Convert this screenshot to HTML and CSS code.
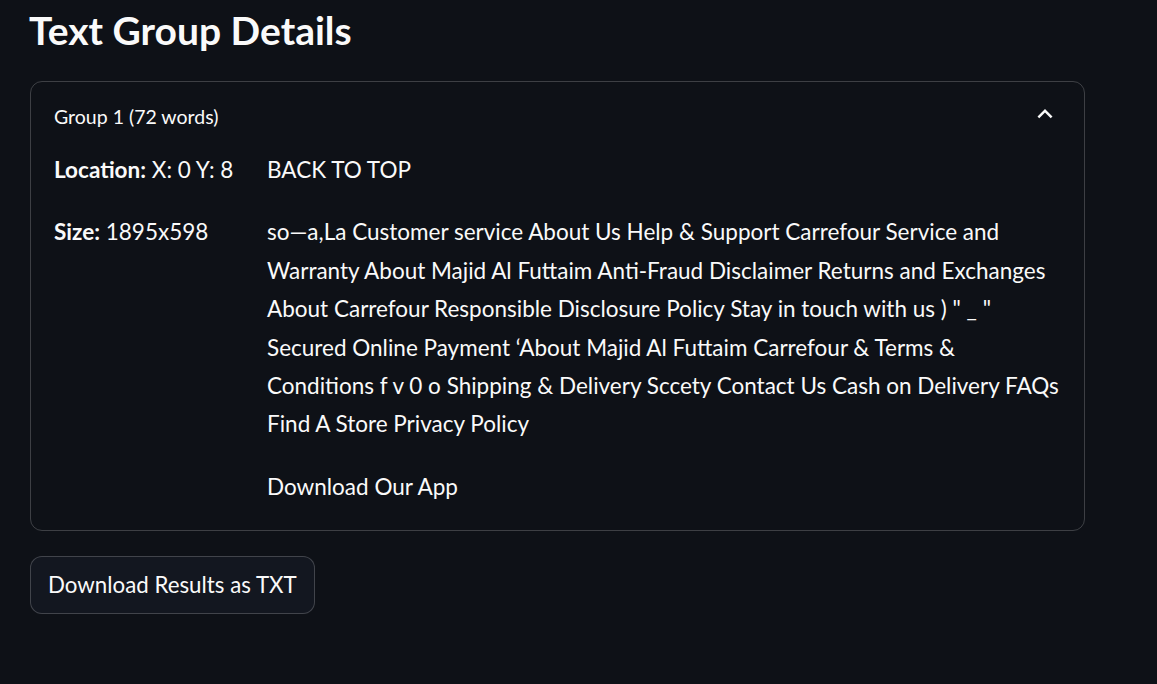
FILE: index.html
```html
<!DOCTYPE html>
<html lang="en">
<head>
<meta charset="utf-8">
<title>Text Group Details</title>
<link rel="stylesheet" href="styles.css">
</head>
<body>
<main class="main">
  <h2 class="title">Text Group Details</h2>
  <section class="expander">
    <div class="expander-header">
      <span class="expander-label">Group 1 (72 words)</span>
      <svg class="chevron" viewBox="0 0 24 24" width="30" height="30" aria-hidden="true"><path d="M12 8l-6 6 1.41 1.41L12 10.83l4.59 4.58L18 14z" fill="#fafafa"/></svg>
    </div>
    <div class="expander-body">
      <div class="col-meta">
        <p><strong>Location:</strong> X: 0 Y: 8</p>
        <p><strong>Size:</strong> 1895x598</p>
      </div>
      <div class="col-text">
        <p>BACK TO TOP</p>
        <p>so—a,La Customer service About Us Help &amp; Support Carrefour Service and Warranty About Majid Al Futtaim Anti-Fraud Disclaimer Returns and Exchanges About Carrefour Responsible Disclosure Policy Stay in touch with us ) " _ " Secured Online Payment ‘About Majid Al Futtaim Carrefour &amp; Terms &amp; Conditions f v 0 o Shipping &amp; Delivery Sccety Contact Us Cash on Delivery FAQs Find A Store Privacy Policy</p>
        <p>Download Our App</p>
      </div>
    </div>
  </section>
  <button class="btn" type="button">Download Results as TXT</button>
</main>
</body>
</html>
```
FILE: styles.css
```css
* { box-sizing: border-box; }
html, body { margin: 0; padding: 0; }
body {
  background: #0e1117;
  color: #fafafa;
  font-family: "Lato", "Liberation Sans", sans-serif;
  font-size: 22.5px;
  line-height: 38.4px;
}
.main {
  padding: 6px 0 0 30px;
  width: 1085px;
}
.title {
  margin: 0 0 27px -1px;
  font-size: 39px;
  line-height: 48px;
  font-weight: 700;
}
.expander {
  border: 1px solid rgba(250, 250, 250, 0.2);
  border-radius: 12px;
  width: 1055px;
}
.expander-header {
  height: 69px;
  padding: 0 24px 0 23px;
  display: flex;
  align-items: center;
  justify-content: space-between;
}
.expander-label {
  font-size: 19.5px;
  line-height: 30px;
}
.chevron {
  display: block;
  margin-top: -5px;
}
.expander-body {
  display: flex;
  padding: 0 24px 24px 23px;
}
.expander-body p {
  margin: 0 0 24px;
}
.expander-body p:last-child {
  margin-bottom: 0;
}
.col-meta {
  width: 213px;
  flex: none;
}
.col-meta strong { font-weight: 700; }
.col-text {
  flex: 1;
  min-width: 0;
}
.btn {
  margin-top: 25px;
  height: 58px;
  width: 285px;
  padding: 0 0 0 17px;
  display: flex;
  align-items: center;
  background: #131720;
  color: #fafafa;
  border: 1px solid rgba(250, 250, 250, 0.2);
  border-radius: 12px;
  font-family: inherit;
  font-size: 22.3px;
  line-height: 38px;
}
```
